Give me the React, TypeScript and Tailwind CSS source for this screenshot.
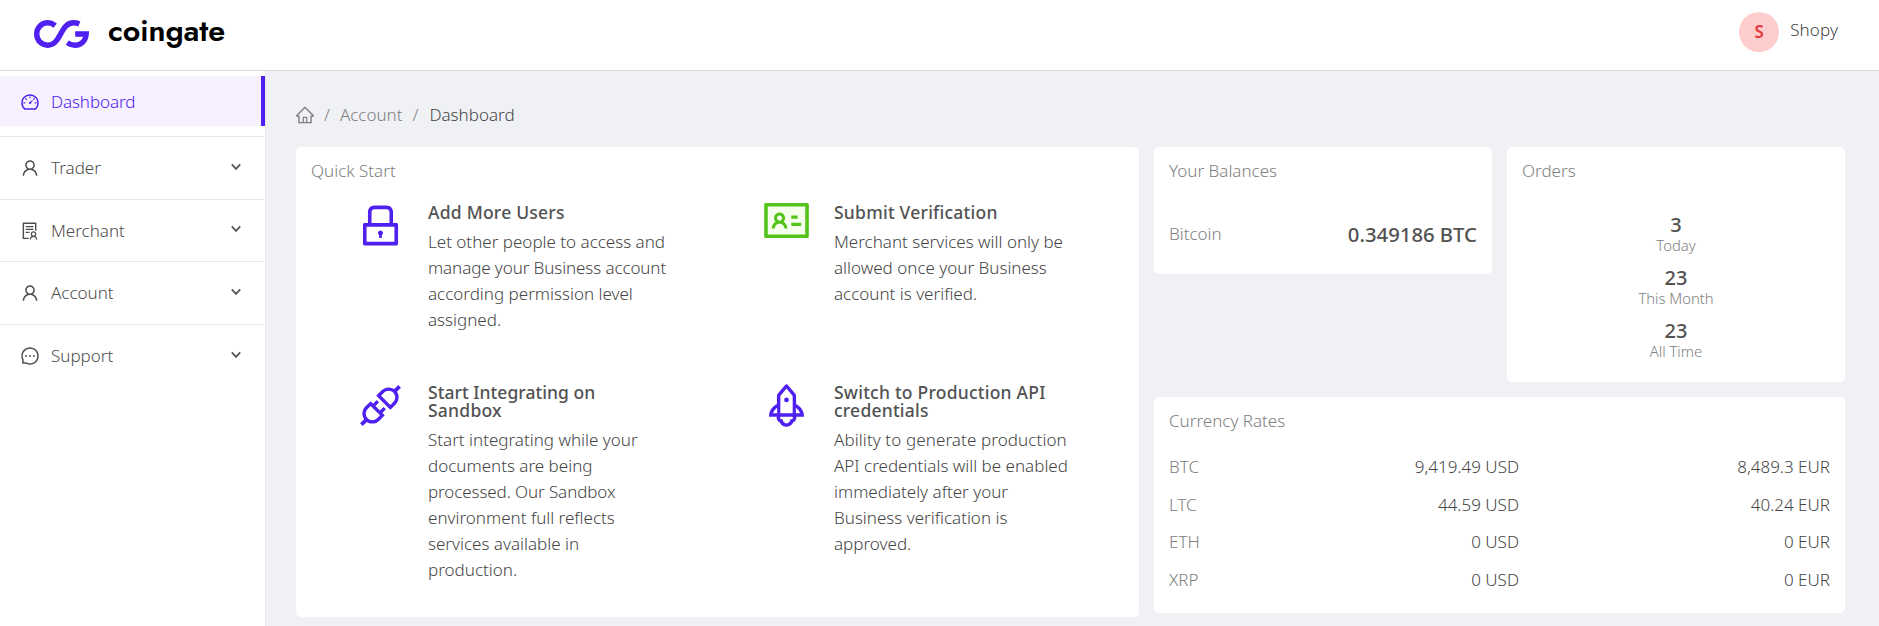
import React from "react";
import type { ReactNode } from "react";
import type { IconType } from "react-icons";
import {
  AiOutlineApi,
  AiOutlineDashboard,
  AiOutlineHome,
  AiOutlineIdcard,
  AiOutlineLock,
  AiOutlineMessage,
  AiOutlineRocket,
  AiOutlineSolution,
  AiOutlineUser,
} from "react-icons/ai";

function Logo() {
  return (
    <div className="flex items-start">
      <svg className="mt-1.5" width="55" height="28" viewBox="0 0 55 28" fill="none" stroke="#4f20f0" strokeWidth="5.4">
        <path d="M21.2 5.6C18.6 3.6 16.4 2.8 13.8 2.8C7.4 2.8 2.7 7.8 2.7 14S7.4 25.2 13.8 25.2C20 25.2 23 20.6 26.3 14.6C30 7.8 33 2.8 39.6 2.8C41.8 2.8 43.5 3.2 45.3 4" />
        <path d="M33.2 22.8C35.8 24.5 38.3 25.2 41 25.2C47.4 25.2 51.6 20.6 52.2 14H41.2" />
      </svg>
      <span className="-mt-1 ml-[19px] font-[Jost,Futura,sans-serif] text-[30.5px] leading-[40px] font-semibold tracking-[-0.1px] text-black">
        coingate
      </span>
    </div>
  );
}

function Chevron() {
  return (
    <svg className="mb-[3px]" width="12" height="8" viewBox="0 0 12 8" fill="none" stroke="#595959" strokeWidth="1.9">
      <path d="M1.8 1.4L6 5.8L10.2 1.4" />
    </svg>
  );
}

const menu: { label: string; icon: IconType; box: string }[] = [
  { label: "Trader", icon: AiOutlineUser, box: "h-[63px]" },
  { label: "Merchant", icon: AiOutlineSolution, box: "h-[62px]" },
  { label: "Account", icon: AiOutlineUser, box: "h-[63px]" },
  { label: "Support", icon: AiOutlineMessage, box: "h-[63px]" },
];

function Sidebar() {
  return (
    <nav className="w-[266px] shrink-0 border-r border-[#e8e8e8] bg-white pt-[5px]">
      <div className="mb-[10px] flex h-[50px] items-center border-r-4 border-[#4f20f0] bg-[#f6f0ff] pt-px pl-[20px] text-[#4f20f0]">
        <AiOutlineDashboard className="size-5" />
        <span className="ml-[11px] tracking-[-0.1px]">Dashboard</span>
      </div>
      {menu.map(({ label, icon: Icon, box }) => (
        <div
          key={label}
          className={`${box} mr-px flex items-center border-t border-[#e8e8e8] pr-[22px] pl-[20px] text-[#4d4d4d]`}
        >
          <Icon className="size-5" />
          <span className="ml-[11px] flex-1">{label}</span>
          <Chevron />
        </div>
      ))}
    </nav>
  );
}

function Card({ title, className, children }: { title: string; className: string; children: ReactNode }) {
  return (
    <section className={`rounded-[5px] bg-white px-[15px] pt-[11px] ${className}`}>
      <h2 className="leading-[26px] text-[#808080]">{title}</h2>
      {children}
    </section>
  );
}

function Step({ icon, title, children }: { icon: ReactNode; title: ReactNode; children: ReactNode }) {
  return (
    <div className="flex w-[406px] items-start">
      <div className="flex w-[93px] shrink-0 justify-center pr-0.5">{icon}</div>
      <div className="whitespace-nowrap">
        <h3 className="pt-[3px] text-[17.5px] leading-[18px] font-medium tracking-[0.23px] text-[#525252]">{title}</h3>
        <p className="mt-2 leading-[26px] text-[#454545]">{children}</p>
      </div>
    </div>
  );
}

const orders = [
  ["3", "Today"],
  ["23", "This Month"],
  ["23", "All Time"],
];

const rates = [
  ["BTC", "9,419.49 USD", "8,489.3 EUR"],
  ["LTC", "44.59 USD", "40.24 EUR"],
  ["ETH", "0 USD", "0 EUR"],
  ["XRP", "0 USD", "0 EUR"],
];

export default function App() {
  return (
    <div className="flex h-[626px] w-[1879px] flex-col overflow-hidden bg-[#f0f1f5] font-['Noto_Sans','Open_Sans',sans-serif] text-[17px] font-light text-[#454545]">
      <header className="flex h-[71px] shrink-0 items-start justify-between border-b border-[#d9d9d9] bg-white pr-[41px] pl-[34px]">
        <div className="pt-[14px]">
          <Logo />
        </div>
        <div className="flex items-start pt-3">
          <span className="flex size-10 items-center justify-center rounded-full bg-[#fdcdce] font-semibold text-[#e33b3d]">
            S
          </span>
          <span className="ml-[11px] leading-[36px] tracking-[0.1px]">Shopy</span>
        </div>
      </header>
      <div className="flex min-h-0 flex-1">
        <Sidebar />
        <main className="pt-[31px] pl-[30px]">
          <div className="flex h-[26px] items-center text-[#808080]">
            <AiOutlineHome className="-ml-px size-5" />
            <span className="ml-[9px]">/</span>
            <span className="ml-[10px]">Account</span>
            <span className="ml-[10px]">/</span>
            <span className="ml-[11px] text-[#454545]">Dashboard</span>
          </div>
          <div className="mt-[19px] flex gap-[15px]">
            <Card title="Quick Start" className="h-[470px] w-[843px]">
              <div className="grid grid-cols-[406px_406px] grid-rows-[180px_auto] pt-4 pl-[24px]">
                <Step icon={<AiOutlineLock className="size-[51px] text-[#4f20f0]" />} title="Add More Users">
                  Let other people to access and
                  <br />
                  <span className="tracking-[-0.1px]">manage your Business account</span>
                  <br />
                  according permission level
                  <br />
                  assigned.
                </Step>
                <Step
                  icon={
                    <AiOutlineIdcard className="-mt-[5px] size-[51px] bg-[linear-gradient(#f6ffed,#f6ffed)] bg-[length:40px_32px] bg-center bg-no-repeat text-[#52c41a]" />
                  }
                  title="Submit Verification"
                >
                  Merchant services will only be
                  <br />
                  allowed once your Business
                  <br />
                  account is verified.
                </Step>
                <Step
                  icon={<AiOutlineApi className="size-[51px] text-[#4f20f0]" />}
                  title={
                    <>
                      <span className="tracking-[0.05px]">Start Integrating on</span>
                      <br />
                      Sandbox
                    </>
                  }
                >
                  Start integrating while your
                  <br />
                  documents are being
                  <br />
                  <span className="tracking-[-0.1px]">processed. Our Sandbox</span>
                  <br />
                  environment full reflects
                  <br />
                  services available in
                  <br />
                  production.
                </Step>
                <Step
                  icon={<AiOutlineRocket className="size-[51px] text-[#4f20f0]" />}
                  title={
                    <>
                      Switch to Production API
                      <br />
                      credentials
                    </>
                  }
                >
                  <span className="tracking-[0.1px]">Ability to generate production</span>
                  <br />
                  API credentials will be enabled
                  <br />
                  immediately after your
                  <br />
                  Business verification is
                  <br />
                  approved.
                </Step>
              </div>
            </Card>
            <div className="flex w-[691px] flex-col gap-[15px]">
              <div className="flex items-start justify-between">
                <Card title="Your Balances" className="h-[127px] w-[338px]">
                  <div className="flex items-center justify-between pt-[35px]">
                    <span className="text-[#808080]">Bitcoin</span>
                    <span className="text-[20.3px] leading-[30px] font-medium text-[#525252]">0.349186 BTC</span>
                  </div>
                </Card>
                <Card title="Orders" className="h-[235px] w-[338px]">
                  <div className="flex flex-col items-center pt-[26px]">
                    {orders.map(([count, label]) => (
                      <div key={label} className="flex h-[53px] flex-col items-center">
                        <span className="text-[20px] leading-[30px] font-medium text-[#525252]">{count}</span>
                        <span className="-mt-1 text-[14.8px] leading-[18px] text-[#808080]">{label}</span>
                      </div>
                    ))}
                  </div>
                </Card>
              </div>
              <Card title="Currency Rates" className="h-[216px]">
                <div className="flex flex-col pt-[14px]">
                  {rates.map(([coin, usd, eur]) => (
                    <div key={coin} className="flex h-[37.6px] items-center">
                      <span className="w-[150px] text-[#808080]">{coin}</span>
                      <span className="w-[200px] text-right">{usd}</span>
                      <span className="flex-1 text-right">{eur}</span>
                    </div>
                  ))}
                </div>
              </Card>
            </div>
          </div>
        </main>
      </div>
    </div>
  );
}
